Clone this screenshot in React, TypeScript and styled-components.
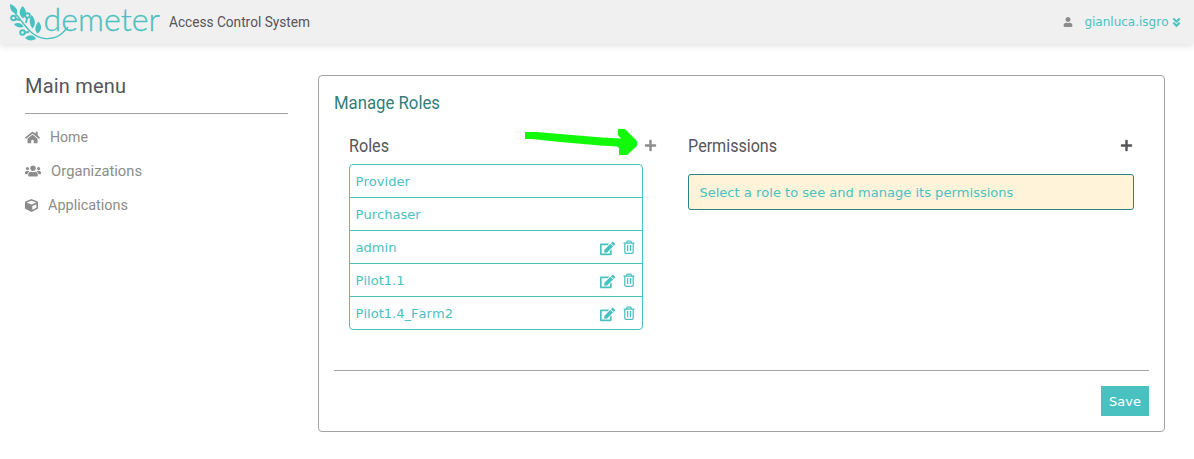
import React from "react";
import styled, { createGlobalStyle } from "styled-components";
import { FaHome, FaUsers, FaCube, FaUser, FaAngleDoubleDown, FaEdit, FaPlus } from "react-icons/fa";

const TEAL = "#4ac1c1";
const DARK_TEAL = "#2f7f7c";
const INK = "#55555a";
const GREY = "#8c8c8c";

const GlobalStyle = createGlobalStyle`
  * { box-sizing: border-box; }
  body { margin: 0; background: #fff; font-family: "DejaVu Sans", sans-serif; font-size: 13.05px; font-kerning: none; color: ${TEAL}; }
  svg { display: block; flex: none; }
`;

const Page = styled.div`
  height: 459px;
  overflow: hidden;
`;

const Header = styled.header`
  height: 44px;
  background: #f0f0f0;
  box-shadow: 0 2px 7px rgba(0, 0, 0, 0.12);
  display: flex;
  align-items: center;
  padding: 0 12px 0 0;
`;

const Fitted = styled.svg<{ $color: string }>`
  overflow: visible;
  fill: ${(p) => p.$color};
  font-family: Roboto, sans-serif;
`;

const User = styled.div`
  margin-left: auto;
  display: flex;
  align-items: center;
  line-height: 16px;
  font-size: 12px;
  svg:first-child { color: ${GREY}; margin-right: 11.5px; }
  svg:last-child { margin-left: 2.5px; }
`;

const Body = styled.div`
  display: flex;
  padding: 31px 29px 0 25px;
`;

const Sidebar = styled.nav`
  width: 263px;
  margin-right: 30px;
`;

const MenuTitle = styled.div`
  height: 39px;
  border-bottom: 1px solid #a3a3a3;
  margin-bottom: 6px;
`;

const MenuItem = styled.a`
  height: 34px;
  display: flex;
  align-items: center;
  gap: 10px;
  color: ${GREY};
`;

const Panel = styled.main`
  width: 847px;
  height: 357px;
  border: 1px solid #a3a3a3;
  border-radius: 4px;
  padding: 14px 15px 15px;
  display: flex;
  flex-direction: column;
`;

const Columns = styled.div`
  display: flex;
  height: 255px;
  padding: 18px 15px 0;
  border-bottom: 1px solid #a3a3a3;
`;

const Column = styled.section<{ $width: number; $end: number }>`
  width: ${(p) => p.$width}px;
  margin-right: ${(p) => p.$end}px;
`;

const ColumnHead = styled.div<{ $space: number; $color: string }>`
  height: 23px;
  display: flex;
  align-items: center;
  justify-content: space-between;
  margin-bottom: ${(p) => p.$space}px;
  padding-right: 1px;
  color: ${(p) => p.$color};
`;

const Roles = styled.ul`
  list-style: none;
  margin: 0;
  padding: 0;
  width: 294px;
  border: 1px solid ${TEAL};
  border-radius: 4px;
`;

const Role = styled.li`
  height: 33px;
  padding: 0 7px 0 5.6px;
  display: flex;
  align-items: center;
  gap: 8px;
  & + & { border-top: 1px solid ${TEAL}; }
  &:first-child { height: 32px; }
  span { flex: 1; }
  svg:first-of-type { margin-top: 2px; }
`;

const Notice = styled.div`
  height: 36px;
  border: 1px solid ${DARK_TEAL};
  border-radius: 3px;
  background: #fff4d9;
  padding-left: 10.4px;
  line-height: 35px;
`;

const Save = styled.button`
  align-self: flex-end;
  margin-top: 15px;
  width: 48px;
  height: 30px;
  border: 0;
  padding: 0;
  background: ${TEAL};
  color: #fff;
  font: 13px "DejaVu Sans", sans-serif;
`;

const Pointer = styled.svg`
  position: absolute;
  left: 525px;
  top: 128px;
`;

type LabelProps = { text: string; width: number; size: number; height: number; base: number; color: string; spacing?: boolean };

function Label({ text, width, size, height, base, color, spacing }: LabelProps) {
  return (
    <Fitted $color={color} width={width} height={height}>
      <text x="0" y={base} fontSize={size} textLength={width} lengthAdjust={spacing ? "spacing" : "spacingAndGlyphs"}>{text}</text>
    </Fitted>
  );
}

function Logo() {
  return (
    <svg width="169" height="44" fill={TEAL} overflow="visible">
      <path d="M10 4C15 6 19 10 16.500 14C11 12 10 9 10 4Z" />
      <path d="M22.500 6C27 10 27 15 23 18.500C18.500 15 19 10 22.500 6Z" />
      <path d="M14 24C18 22 22 23 23.500 27C19 28 16 27 14 24Z" />
      <path d="M31.500 15C35.500 19 36 25 32.500 28.500C29 24 29 19 31.500 15Z" />
      <path d="M38.500 21.500C42.500 26 41.500 31 37.500 33.500C34 30 35 26 38.500 21.500Z" />
      <path d="M25 38C29 34 34 34.500 36 39C32 41 28 41 25 38Z" />
      <g fill="none" stroke={TEAL} strokeWidth="1.9">
        <circle cx="13.500" cy="18" r="2.300" />
        <circle cx="27.500" cy="15.500" r="2.300" />
        <circle cx="22.500" cy="32.500" r="2.300" />
        <path d="M15.500 19L20 20M27 18L26 23M25 32.500L29 32" />
        <path d="M15 13C26 26 31 37 45 38.500C57 39.500 62 34 68 27" strokeWidth="1.400" />
      </g>
      <text x="43.500" y="31" fontFamily="Lato, sans-serif" fontWeight="300" fontSize="31" stroke={TEAL} strokeWidth=".3" textLength="116.500" lengthAdjust="spacingAndGlyphs">demeter</text>
    </svg>
  );
}

function Trash() {
  return (
    <svg width="12" height="14" viewBox="0 0 12 14" fill="none" stroke={TEAL} strokeWidth="1.25">
      <path d="M.5 3H11.5M3.5 3L4.2 1H7.8L8.5 3M1.8 3V12Q1.8 13.3 3 13.3H9Q10.2 13.3 10.2 12V3M4.6 5V11M7.4 5V11" />
    </svg>
  );
}

const roles = [
  { name: "Provider", editable: false },
  { name: "Purchaser", editable: false },
  { name: "admin", editable: true },
  { name: "Pilot1.1", editable: true },
  { name: "Pilot1.4_Farm2", editable: true },
];

export default function App() {
  return (
    <Page>
      <GlobalStyle />
      <Header>
        <Logo />
        <Label text="Access Control System" width={141} size={15} height={44} base={27} color={INK} />
        <User>
          <FaUser size={10} />
          <span>gianluca.isgro</span>
          <FaAngleDoubleDown size={11} stroke={TEAL} strokeWidth={24} />
        </User>
      </Header>
      <Body>
        <Sidebar>
          <MenuTitle><Label text="Main menu" width={101} size={20} height={38} base={18} color={INK} spacing /></MenuTitle>
          <MenuItem><FaHome size={15} /><Label text="Home" width={38} size={15} height={20} base={15} color={GREY} /></MenuItem>
          <MenuItem><FaUsers size={16} /><Label text="Organizations" width={91} size={15} height={20} base={15} color={GREY} /></MenuItem>
          <MenuItem><FaCube size={13} /><Label text="Applications" width={80} size={15} height={20} base={15} color={GREY} /></MenuItem>
        </Sidebar>
        <Panel>
          <Label text="Manage Roles" width={106} size={18} height={26} base={19} color={DARK_TEAL} />
          <Columns>
            <Column $width={309} $end={30}>
              <ColumnHead $space={7} $color={GREY}>
                <Label text="Roles" width={40} size={18} height={22} base={17} color={INK} />
                <FaPlus size={13} />
              </ColumnHead>
              <Roles>
                {roles.map((r) => (
                  <Role key={r.name}>
                    <span>{r.name}</span>
                    {r.editable && <><FaEdit size={15} /><Trash /></>}
                  </Role>
                ))}
              </Roles>
            </Column>
            <Column $width={446} $end={0}>
              <ColumnHead $space={17} $color={INK}>
                <Label text="Permissions" width={89} size={18} height={22} base={17} color={INK} />
                <FaPlus size={13} />
              </ColumnHead>
              <Notice>Select a role to see and manage its permissions</Notice>
            </Column>
          </Columns>
          <Save>Save</Save>
        </Panel>
      </Body>
      <Pointer width="113" height="28" fill="#12fa0a">
        <path d="M0 4H12L35 6L77 9.500L96 10.500L93 7V1H100L112 13V18L102 27H94V20L92 18.500L75 17.500L35 14L7 11H0Z" />
      </Pointer>
    </Page>
  );
}
